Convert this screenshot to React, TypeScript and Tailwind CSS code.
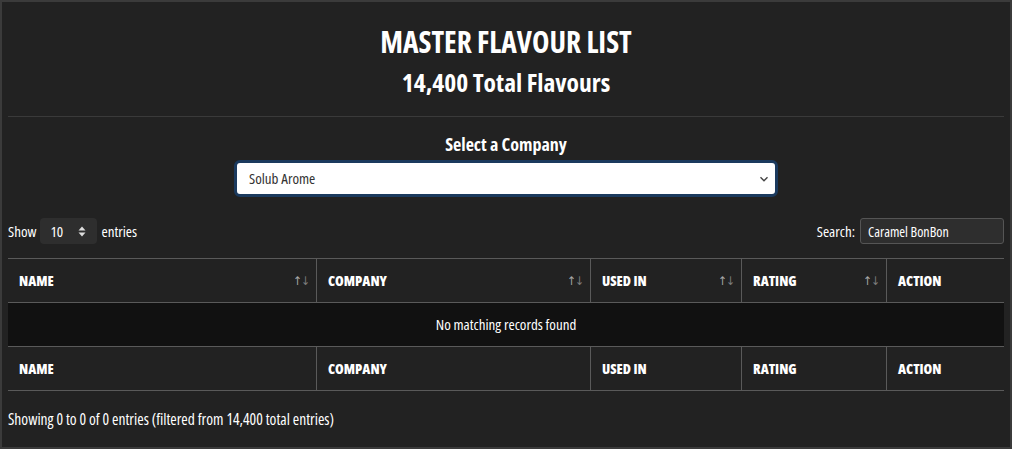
import React from "react";

function SortIcon() {
  return (
    <span className="font-['DejaVu_Sans',sans-serif] text-[12px] leading-none tracking-[-1px]">
      <span className="text-[#a9a9a9]">↑</span>
      <span className="text-[#7c7c7c]">↓</span>
    </span>
  );
}

const cols = [
  { name: "NAME", w: "w-[309px]", sort: true },
  { name: "COMPANY", w: "w-[274px]", sort: true },
  { name: "USED IN", w: "w-[151px]", sort: true },
  { name: "RATING", w: "w-[145px]", sort: true },
  { name: "ACTION", w: "flex-1", sort: false },
];

function HeadRow({ sort }: { sort: boolean }) {
  return (
    <div className="flex h-[44px] border-b border-[#5a5a5a]">
      {cols.map((c, i) => (
        <div
          key={c.name}
          className={`${c.w} flex items-center justify-between pl-[11px] pr-[7px] ${i < cols.length - 1 ? "border-r border-[#5a5a5a]" : ""}`}
        >
          <span className="text-[14px] font-extrabold text-white">{c.name}</span>
          {sort && c.sort ? <SortIcon /> : null}
        </div>
      ))}
    </div>
  );
}

export default function App() {
  return (
    <div className="h-[449px] bg-[#222222] border-2 border-[#3b3b3b] px-[6px] text-white font-['Open_Sans',sans-serif] font-stretch-condensed font-medium">
      <div className="flex flex-col items-center pt-[22px]">
        <h1 className="text-[29.5px] leading-[36px] font-bold">MASTER FLAVOUR LIST</h1>
        <h2 className="mt-[6px] text-[25.5px] leading-[32px] font-bold">14,400 Total Flavours</h2>
      </div>
      <div className="mt-[18px] h-px bg-[#3a3a3a]" />
      <div className="flex flex-col items-center">
        <div className="mt-[16px] text-[18px] leading-[22px] font-bold">Select a Company</div>
        <div className="mt-[5px] w-[544px] h-[37px] rounded-[6px] border-[3px] border-[#1b3a5e] bg-white flex items-center justify-between pl-[12px] pr-[4px] text-[#333]">
          <span className="text-[15px]">Solub Arome</span>
          <svg width="14" height="14" viewBox="0 0 16 16" fill="none" stroke="#444" strokeWidth="1.6">
            <path d="M4 6l4 4 4-4" />
          </svg>
        </div>
      </div>
      <div className="mt-[21px] flex items-center justify-between h-[26px]">
        <div className="flex items-center text-[15px]">
          <span>Show</span>
          <div className="ml-[4px] w-[57px] h-[26px] rounded-[4px] bg-[#2e2e2e] flex items-center justify-between pl-[10px] pr-[11px]">
            <span>10</span>
            <svg width="8" height="11" viewBox="0 0 8 11" fill="#ddd">
              <path d="M4 0.5L7.5 4.5H0.5Z" />
              <path d="M4 10.5L7.5 6.5H0.5Z" />
            </svg>
          </div>
          <span className="ml-[4px]">entries</span>
        </div>
        <div className="flex items-center text-[15px]">
          <span>Search:</span>
          <div className="ml-[5px] w-[144px] h-[26px] rounded-[3px] bg-[#2e2e2e] border border-[#555] flex items-center pl-[7px] text-[14px]">
            Caramel BonBon
          </div>
        </div>
      </div>
      <div className="mt-[14px] border-t border-[#5a5a5a]">
        <HeadRow sort />
        <div className="h-[44px] bg-[#111111] border-b border-[#5a5a5a] flex items-center justify-center text-[15px]">
          No matching records found
        </div>
        <HeadRow sort={false} />
      </div>
      <div className="mt-[18px] text-[15.5px] leading-[20px]">
        Showing 0 to 0 of 0 entries (filtered from 14,400 total entries)
      </div>
    </div>
  );
}
